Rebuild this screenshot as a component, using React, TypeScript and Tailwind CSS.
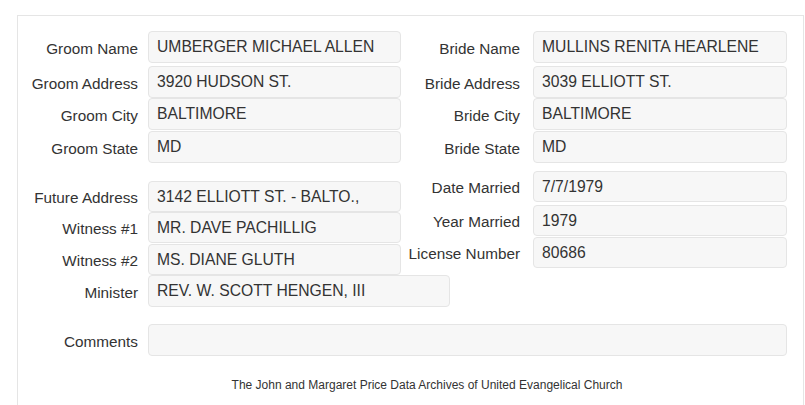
import React from "react";

type RowProps = {
  label: string;
  value: string;
  mt: string;
  right?: boolean;
  boxW?: string;
  h?: string;
};

function Row({ label, value, mt, right, boxW, h }: RowProps) {
  return (
    <div className={`flex items-center ${mt}`}>
      <div
        className={`${right ? "w-[119px] mr-[13px]" : "w-[120px] mr-[10px]"} shrink-0 text-right pt-[3px] whitespace-nowrap text-[15.3px]`}
      >
        {label}
      </div>
      <div
        className={`${boxW ?? (right ? "w-[254px]" : "w-[253px]")} ${h ?? "h-[32px]"} shrink-0 flex items-center pl-[8px] bg-[#f7f7f7] border border-[#e5e5e5] rounded-[4px] whitespace-nowrap`}
      >
        {value}
      </div>
    </div>
  );
}

export default function App() {
  return (
    <div
      className="w-[805px] h-[405px] bg-white overflow-hidden text-[#333] text-[15.7px] leading-[18px]"
      style={{ fontFamily: '"Liberation Sans", Arial, sans-serif' }}
    >
      <div className="ml-[17px] mt-[15px] w-[787px] h-[420px] border border-[#e5e5e5] pt-[15px]">
        <div className="flex">
          <div className="w-[383px] shrink-0 flex flex-col">
            <Row label="Groom Name" value="UMBERGER MICHAEL ALLEN" mt="mt-0" />
            <Row label="Groom Address" value="3920 HUDSON ST." mt="mt-[3px]" />
            <Row label="Groom City" value="BALTIMORE" mt="mt-0" />
            <Row label="Groom State" value="MD" mt="mt-[1px]" />
            <Row label="Future Address" value="3142 ELLIOTT ST. - BALTO.," mt="mt-[18px]" h="h-[31px]" />
            <Row label="Witness #1" value="MR. DAVE PACHILLIG" mt="mt-0" h="h-[31px]" />
            <Row label="Witness #2" value="MS. DIANE GLUTH" mt="mt-[1px]" h="h-[31px]" />
            <Row
              label="Minister"
              value="REV. W. SCOTT HENGEN, III"
              mt="mt-0"
              boxW="w-[302px]"
            />
          </div>
          <div className="flex flex-col">
            <Row label="Bride Name" value="MULLINS RENITA HEARLENE" mt="mt-0" right />
            <Row label="Bride Address" value="3039 ELLIOTT ST." mt="mt-[3px]" right />
            <Row label="Bride City" value="BALTIMORE" mt="mt-0" right />
            <Row label="Bride State" value="MD" mt="mt-[1px]" right />
            <Row label="Date Married" value="7/7/1979" mt="mt-[8px]" right h="h-[31px]" />
            <Row label="Year Married" value="1979" mt="mt-[3px]" right h="h-[31px]" />
            <Row label="License Number" value="80686" mt="mt-[1px]" right h="h-[31px]" />
          </div>
        </div>
        <Row label="Comments" value="" mt="mt-[17px]" boxW="w-[639px]" />
        <div className="mt-[21px] pl-[33px] text-center text-[12px] leading-[16px]">
          The John and Margaret Price Data Archives of United Evangelical Church
        </div>
      </div>
    </div>
  );
}
